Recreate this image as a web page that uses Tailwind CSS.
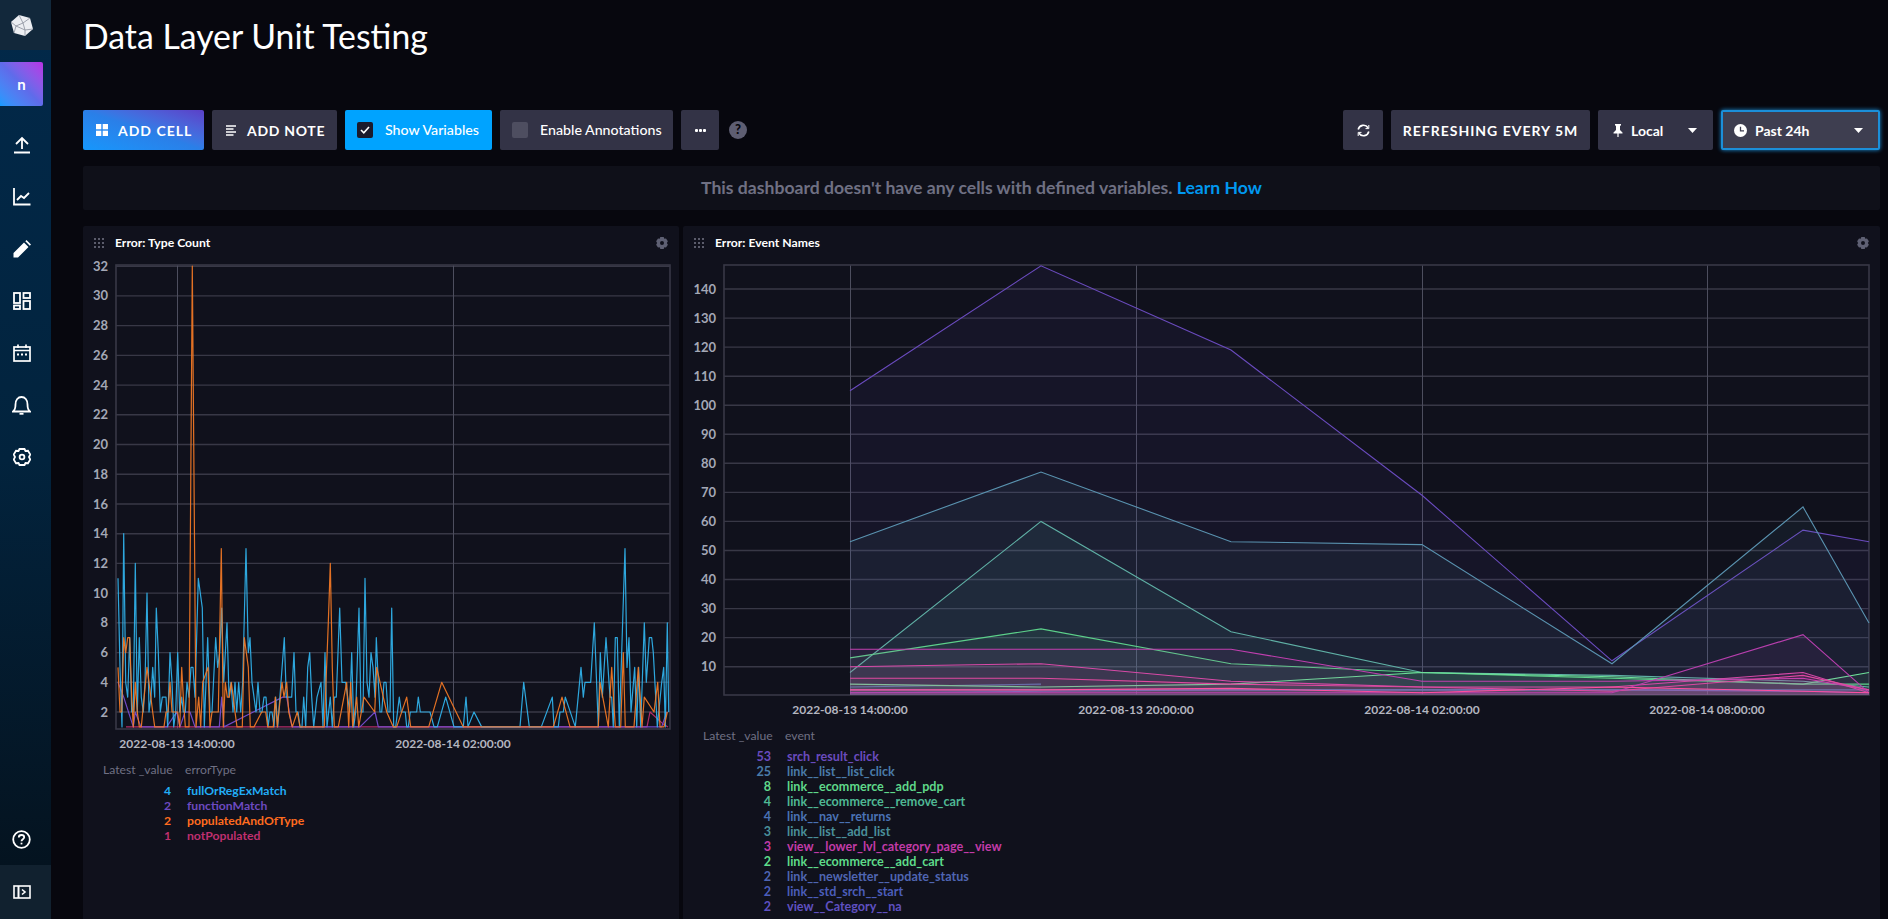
<!DOCTYPE html>
<html lang="en">
<head>
  <meta charset="UTF-8" />
  <title>Data Layer Unit Testing</title>
  <script src="https://cdn.jsdelivr.net/npm/@tailwindcss/browser@4"></script>
</head>
<body class="bg-[#07070e] h-screen overflow-hidden flex text-white [font-family:Lato,sans-serif]">

  <!-- SIDEBAR -->
  <nav class="w-[51px] shrink-0 h-full flex flex-col bg-gradient-to-b from-[#02294a] via-[#02233d] to-[#04111c]">
    <div class="h-[50px] bg-[#12283b] flex items-center">
      <div class="w-[43px] flex justify-center">
        <svg width="24" height="24" viewBox="9 9 24 24">
          <polygon points="18,11 29,14 32,25 24,32 13,29 10,18" fill="#eceef2"/>
          <path d="M18 11L22 19L29 14M22 19L15 22L10 18M15 22L13 29M15 22L24 26L24 32M24 26L32 25M24 26L22 19" stroke="#8a8f9c" stroke-width="0.8" fill="none"/>
        </svg>
      </div>
    </div>
    <div class="mt-[12px] w-[43px] h-[44px] rounded-r-[2px] bg-gradient-to-tr from-[#0f9bff] via-[#5f6bea] to-[#b72fe6] flex items-center justify-center text-[15px] font-bold">n</div>
    <div class="mt-[13px] w-[43px] flex flex-col items-center">
      <div class="h-[52px] flex items-center justify-center">
        <svg width="18" height="18" viewBox="0 0 18 18" fill="none" stroke="white" stroke-width="1.8"><path d="M1 16.5H17M9 13V2M3 8L9 2L15 8"/></svg>
      </div>
      <div class="h-[52px] flex items-center justify-center">
        <svg width="18" height="18" viewBox="0 0 18 18" fill="none" stroke="white" stroke-width="1.8"><path d="M1 0V16.5H17.5M4 12L8 8L11 10L16 5"/></svg>
      </div>
      <div class="h-[52px] flex items-center justify-center">
        <svg width="18" height="18" viewBox="0 0 18 18" fill="white"><path d="M0.5 13L11 2.5L15.5 7L5 17.5H0.5ZM12.3 1.2L13.5 0L18 4.5L16.8 5.7Z"/></svg>
      </div>
      <div class="h-[52px] flex items-center justify-center">
        <svg width="18" height="18" viewBox="0 0 18 18" fill="none" stroke="white" stroke-width="1.8"><rect x="1" y="1" width="6" height="10"/><rect x="10.5" y="1" width="6.5" height="5"/><rect x="1" y="13.5" width="6" height="3.5"/><rect x="10.5" y="9" width="6.5" height="8"/></svg>
      </div>
      <div class="h-[52px] flex items-center justify-center">
        <svg width="18" height="18" viewBox="0 0 18 18" fill="none" stroke="white" stroke-width="1.7"><rect x="1" y="3" width="16" height="14"/><path d="M1 6.5H17M5 0.5V4M13 0.5V4"/><path d="M4 10.5H6M8 10.5H10M12 10.5H14" stroke-width="1.8"/></svg>
      </div>
      <div class="h-[52px] flex items-center justify-center">
        <svg width="19" height="19" viewBox="0 0 19 19" fill="none" stroke="white" stroke-width="1.8"><path d="M1 15.5H18C16 14 15.5 12 15.5 8.5C15.5 4 13 1 9.5 1C6 1 3.5 4 3.5 8.5C3.5 12 3 14 1 15.5Z"/><path d="M7.5 17.8H11.5"/></svg>
      </div>
      <div class="h-[52px] flex items-center justify-center">
        <svg width="18" height="18" viewBox="0 0 18 18" fill="none" stroke="white" stroke-width="1.8"><path d="M6.5 1H11.5L12.5 3L15 2.8L17.3 6.5L16 9L17.3 11.5L15 15.2L12.5 15L11.5 17H6.5L5.5 15L3 15.2L0.7 11.5L2 9L0.7 6.5L3 2.8L5.5 3Z"/><circle cx="9" cy="9" r="2.4"/></svg>
      </div>
    </div>
    <div class="mt-auto flex flex-col">
      <div class="w-[43px] h-[54px] mb-[-1px] flex items-center justify-center">
        <svg width="19" height="19" viewBox="0 0 19 19" fill="none" stroke="white" stroke-width="1.8"><circle cx="9.5" cy="9.5" r="8.3"/><path d="M6.8 7.4C6.8 5.8 8 5 9.5 5C11 5 12.2 5.9 12.2 7.3C12.2 9.2 9.5 9.2 9.5 11.2"/><path d="M9.5 12.7V14.4"/></svg>
      </div>
      <div class="h-[54px] bg-[#11212f] flex items-center">
        <div class="w-[43px] flex justify-center">
          <svg width="18" height="14" viewBox="0 0 18 14" fill="none" stroke="white" stroke-width="1.6"><rect x="1" y="1" width="16" height="12"/><path d="M5.5 1V13" stroke-width="2"/><path d="M9 4.5L12 7L9 9.5"/></svg>
        </div>
      </div>
    </div>
  </nav>

  <!-- MAIN -->
  <main class="flex-1 min-w-0 pl-[32px] pr-[8px]">
    <h1 class="h-[110px] pt-[15px] text-[33.8px] leading-[42px] font-normal">Data Layer Unit Testing</h1>

    <!-- TOOLBAR -->
    <div class="h-[40px] flex justify-between">
      <div class="flex items-center gap-[8px]">
        <button class="h-[40px] w-[121px] rounded-[2px] bg-gradient-to-tr from-[#1497fc] via-[#2a7fe8] to-[#5a3fc8] flex items-center pl-[13px] gap-[10px] text-[14px] font-bold tracking-[1px]">
          <svg width="12" height="12" viewBox="0 0 12 12" fill="white"><rect width="5.3" height="5.3"/><rect x="6.7" width="5.3" height="5.3"/><rect y="6.7" width="5.3" height="5.3"/><rect x="6.7" y="6.7" width="5.3" height="5.3"/></svg>
          ADD CELL
        </button>
        <button class="h-[40px] w-[125px] rounded-[2px] bg-[#333346] flex items-center pl-[13px] gap-[10px] text-[14px] font-bold tracking-[0.7px]">
          <svg width="12" height="11" viewBox="0 0 12 11" fill="none" stroke="white" stroke-width="1.3"><path d="M1 1H11M1 4H8.5M1 7H11M1 10H8.5"/></svg>
          ADD NOTE
        </button>
        <div class="h-[40px] w-[147px] rounded-[2px] bg-[#00a3ff] flex items-center pl-[12px] gap-[12px] text-[14.2px] font-medium">
          <span class="w-[16px] h-[16px] rounded-[2px] bg-[#1b1b2d] flex items-center justify-center">
            <svg width="10" height="8" viewBox="0 0 10 8" fill="none" stroke="white" stroke-width="1.6"><path d="M1 4L3.8 6.8L9 1"/></svg>
          </span>
          Show Variables
        </div>
        <div class="h-[40px] w-[173px] rounded-[2px] bg-[#333346] flex items-center pl-[12px] gap-[12px] text-[14.2px] font-medium">
          <span class="w-[16px] h-[16px] rounded-[2px] bg-[#4e4e60]"></span>
          Enable Annotations
        </div>
        <button class="h-[40px] w-[38px] rounded-[2px] bg-[#333346] flex items-center justify-center">
          <svg width="11" height="3" viewBox="0 0 11 3" fill="white"><rect width="3" height="3" rx="1"/><rect x="4" width="3" height="3" rx="1"/><rect x="8" width="3" height="3" rx="1"/></svg>
        </button>
        <span class="ml-[2px] w-[18px] h-[18px] rounded-full bg-[#5e5e72] flex items-center justify-center text-[13px] font-black text-[#07070e]">?</span>
      </div>
      <div class="flex items-center gap-[8px]">
        <button class="h-[40px] w-[40px] rounded-[2px] bg-[#333346] flex items-center justify-center">
          <svg width="13" height="13" viewBox="0 0 13 13" fill="none" stroke="white" stroke-width="1.6"><path d="M1.2 5.5A5.4 5.4 0 0 1 11 3.8M11.8 7.5A5.4 5.4 0 0 1 2 9.2"/><path d="M11.8 1V4.6H8.5M1.2 12V8.4H4.5" stroke-width="1"/></svg>
        </button>
        <div class="h-[40px] w-[199px] rounded-[2px] bg-[#333346] flex items-center justify-center text-[14px] font-bold tracking-[1px]">REFRESHING EVERY 5M</div>
        <div class="h-[40px] w-[115px] rounded-[2px] bg-[#333346] flex items-center pl-[15px] pr-[16px] text-[14px] font-bold">
          <svg class="mr-[8px]" width="10" height="13" viewBox="0 0 10 13" fill="white"><path d="M2 0H8V1.2L7 2V6L9.5 8.5V9.5H5.6V13H4.4V9.5H0.5V8.5L3 6V2L2 1.2Z"/></svg>
          Local
          <svg class="ml-auto" width="9" height="5" viewBox="0 0 9 5" fill="white"><path d="M0 0H9L4.5 5Z"/></svg>
        </div>
        <div class="h-[40px] w-[159px] rounded-[2px] bg-[#3e3e50] border-2 border-[#1b8fd9] shadow-[0_0_4px_#1b8fd9] flex items-center pl-[11px] pr-[15px] text-[14px] font-bold">
          <svg class="mr-[8px]" width="13" height="13" viewBox="0 0 13 13"><circle cx="6.5" cy="6.5" r="6.5" fill="white"/><path d="M6.5 2.8V6.8H10" fill="none" stroke="#3e3e50" stroke-width="1.3"/></svg>
          Past 24h
          <svg class="ml-auto" width="9" height="5" viewBox="0 0 9 5" fill="white"><path d="M0 0H9L4.5 5Z"/></svg>
        </div>
      </div>
    </div>

    <!-- BANNER -->
    <div class="mt-[16px] h-[44px] rounded-[2px] bg-[#0f1019] flex items-center justify-center text-[17.6px] font-bold text-[#6f7083]">
      <span>This dashboard doesn't have any cells with defined variables. <span class="text-[#0098f0]">Learn How</span></span>
    </div>

    <!-- CELLS -->
    <div class="mt-[16px] flex gap-[4px] h-[700px]">
      <section class="w-[596px] shrink-0 rounded-[2px] bg-[#10111c]">
        <header class="h-[32px] flex items-center pt-[2px] pl-[11px] pr-[11px]">
          <svg width="10" height="10" viewBox="0 0 10 10" fill="#5b5c6b"><rect width="2" height="2"/><rect x="4" width="2" height="2"/><rect x="8" width="2" height="2"/><rect y="4" width="2" height="2"/><rect x="4" y="4" width="2" height="2"/><rect x="8" y="4" width="2" height="2"/><rect y="8" width="2" height="2"/><rect x="4" y="8" width="2" height="2"/><rect x="8" y="8" width="2" height="2"/></svg>
          <h3 class="ml-[11px] text-[12.2px] font-bold">Error: Type Count</h3>
          <svg class="ml-auto" width="12" height="12" viewBox="0 0 18 18" fill="#5e6073"><path d="M6.5 0H11.5L12.5 2.5L15 2.2L17.8 6.5L16.3 9L17.8 11.5L15 15.8L12.5 15.5L11.5 18H6.5L5.5 15.5L3 15.8L0.2 11.5L1.7 9L0.2 6.5L3 2.2L5.5 2.5ZM9 6A3 3 0 1 0 9 12A3 3 0 1 0 9 6Z" fill-rule="evenodd"/></svg>
        </header>
        <svg id="chart-left" class="block" width="596" height="497" viewBox="83 258 596 497"></svg>
        <div class="pl-[20px] pt-[5px] text-[12.2px]">
          <div class="flex h-[20px] items-center text-[#6f7083]"><span class="w-[70px] shrink-0 whitespace-nowrap">Latest _value</span><span class="ml-[12px]">errorType</span></div>
          <div class="mt-[3px] flex flex-col font-bold text-[12.2px] leading-[15px]">
            <div class="flex text-[#22adf6]"><span class="w-[68px] text-right">4</span><span class="ml-[16px]">fullOrRegExMatch</span></div>
            <div class="flex text-[#6e4ac0]"><span class="w-[68px] text-right">2</span><span class="ml-[16px]">functionMatch</span></div>
            <div class="flex text-[#ff6c1f]"><span class="w-[68px] text-right">2</span><span class="ml-[16px]">populatedAndOfType</span></div>
            <div class="flex text-[#bf2f6f]"><span class="w-[68px] text-right">1</span><span class="ml-[16px]">notPopulated</span></div>
          </div>
        </div>
      </section>

      <section class="flex-1 min-w-0 rounded-[2px] bg-[#10111c]">
        <header class="h-[32px] flex items-center pt-[2px] pl-[11px] pr-[11px]">
          <svg width="10" height="10" viewBox="0 0 10 10" fill="#5b5c6b"><rect width="2" height="2"/><rect x="4" width="2" height="2"/><rect x="8" width="2" height="2"/><rect y="4" width="2" height="2"/><rect x="4" y="4" width="2" height="2"/><rect x="8" y="4" width="2" height="2"/><rect y="8" width="2" height="2"/><rect x="4" y="8" width="2" height="2"/><rect x="8" y="8" width="2" height="2"/></svg>
          <h3 class="ml-[11px] text-[12.2px] font-bold">Error: Event Names</h3>
          <svg class="ml-auto" width="12" height="12" viewBox="0 0 18 18" fill="#5e6073"><path d="M6.5 0H11.5L12.5 2.5L15 2.2L17.8 6.5L16.3 9L17.8 11.5L15 15.8L12.5 15.5L11.5 18H6.5L5.5 15.5L3 15.8L0.2 11.5L1.7 9L0.2 6.5L3 2.2L5.5 2.5ZM9 6A3 3 0 1 0 9 12A3 3 0 1 0 9 6Z" fill-rule="evenodd"/></svg>
        </header>
        <svg id="chart-right" class="block" width="1197" height="468" viewBox="683 258 1197 468"></svg>
        <div class="pl-[20px] text-[12.2px]">
          <div class="flex h-[20px] items-center text-[#6f7083]"><span class="w-[70px] shrink-0 whitespace-nowrap">Latest _value</span><span class="ml-[12px]">event</span></div>
          <div class="mt-[3px] flex flex-col font-bold text-[12.6px] leading-[15px]">
            <div class="flex text-[#6a4bbe]"><span class="w-[68px] text-right">53</span><span class="ml-[16px]">srch_result_click</span></div>
            <div class="flex text-[#4a7ba8]"><span class="w-[68px] text-right">25</span><span class="ml-[16px]">link__list__list_click</span></div>
            <div class="flex text-[#5fd88a]"><span class="w-[68px] text-right">8</span><span class="ml-[16px]">link__ecommerce__add_pdp</span></div>
            <div class="flex text-[#4fb894]"><span class="w-[68px] text-right">4</span><span class="ml-[16px]">link__ecommerce__remove_cart</span></div>
            <div class="flex text-[#4a72b5]"><span class="w-[68px] text-right">4</span><span class="ml-[16px]">link__nav__returns</span></div>
            <div class="flex text-[#4a8f9a]"><span class="w-[68px] text-right">3</span><span class="ml-[16px]">link__list__add_list</span></div>
            <div class="flex text-[#c23ba8]"><span class="w-[68px] text-right">3</span><span class="ml-[16px]">view__lower_lvl_category_page__view</span></div>
            <div class="flex text-[#5edb8a]"><span class="w-[68px] text-right">2</span><span class="ml-[16px]">link__ecommerce__add_cart</span></div>
            <div class="flex text-[#4f65b2]"><span class="w-[68px] text-right">2</span><span class="ml-[16px]">link__newsletter__update_status</span></div>
            <div class="flex text-[#4b5dba]"><span class="w-[68px] text-right">2</span><span class="ml-[16px]">link__std_srch__start</span></div>
            <div class="flex text-[#5f50c0]"><span class="w-[68px] text-right">2</span><span class="ml-[16px]">view__Category__na</span></div>
          </div>
        </div>
      </section>
    </div>
  </main>

  <script>
    // values read off the chart: pairs of [x offset, value]
    const blue1 = [114,11,120,5,126,1,131,14,137,4,143,3,149,7,155,2,160,2,166,12,172,2,178,7,184,3,190,2,195,4,201,10,207,2,213,3,218,5,224,3,229,9,235,6,241,2,247,3,252,3,258,3,263,1,270,6,276,4,281,1,287,2,293,6,299,2,305,3,310,2,316,2,321,4,327,3,333,5,339,5,345,3,355,11,367,9,373,1,383,7,390,2,396,2,407,7,413,5,419,6,425,9,431,4,441,8,447,3,453,4,459,2,465,4,470,2,476,4,482,2,488,4,498,13,505,6,510,7,516,4,522,3,528,2,534,4,540,2,546,2,552,3,558,3,564,1,570,2,576,2,582,1,587,3,593,1,603,4,613,7,619,3,625,3,635,3,642,6,648,2,654,2,660,1,666,1,671,3,677,1,683,5,689,6,695,3,701,1,711,3,723,4,729,1,735,6,741,1,751,3,757,1,763,3,769,3,779,9,786,4,797,4,803,3,809,2,815,6,821,1,827,2,837,9,843,2,849,2,855,11,861,4,867,3,873,6,879,5,885,3,889,7,895,4];
    const blue2 = [0,2,5,2,12,4,18,4,24,2,30,2,35,9,41,1,47,1,58,3,64,2,70,2,76,2,80,1,85,1,91,2,110,2,115,3,121,2,150,2,162,1,172,1,197,3,222,1,250,1,258,3,264,1,282,2,305,1,420,1,431,4,448,1,484,1,517,3,522,1,535,1,540,2,550,2,556,3,586,1,603,5,610,3,615,4,632,4,643,8,655,1,661,6,667,3,678,7,690,3,695,3,700,1,706,7,712,7,718,1,735,13,741,5,747,7,753,2,764,5,770,1,776,5,782,1,793,8,799,4,808,7,815,7,820,6,832,1,845,4,851,5,856,1,862,8,866,2];
    const orange1 = [114,5,120,2,125,2,131,7,137,6,143,7,149,7,155,3,160,1,166,4,172,2,178,1,184,1,201,5,207,4,218,2,224,1,252,1,258,2,264,2,270,4,276,2,281,2,293,2,299,1,305,5,310,3,316,1,327,1,337,32,348,1,356,3,362,1,368,4,384,5,390,1,396,2,402,2,415,2,424,13,430,1,436,4,442,3,448,3,454,4,460,3,465,2,471,1,487,1,493,7,505,5,511,1,522,1,545,2,557,2,563,1,580,1,586,3,592,1,606,4,612,3,620,4,626,2,637,1,652,2,660,1,733,1,745,8,751,12,757,5,763,1,775,1,800,4,806,1,812,4,818,1,830,3,836,1,852,3,884,2,890,5,900,4];
    const orange2 = [0,4,20,2,40,1,50,1,80,3,92,1,146,1,185,4,250,1,520,1,546,3,570,1,655,1,660,4,685,1,695,5,706,1,722,1,730,6,736,1,762,1,775,5,786,1,793,3,822,2,833,4,840,1,852,1,862,2];
    const purple1 = [114,4,131,3,160,1,166,2,183,1,260,1,290,2,300,1,315,2,330,2,345,1,418,1,425,3,432,1,608,3,620,3,636,1,840,1,885,2,895,1];
    const purple2 = [845,1,860,2];

    function toPoints(list, origin) {
      const out = [];
      for (let i = 0; i < list.length; i += 2) out.push([origin + list[i] / 3, list[i + 1]]);
      return out;
    }

    const yLeft = v => 712 - (v - 2) * 14.86;
    const yRight = v => 695.7 - v * 2.905;

    function grid(cfg) {
      let s = '';
      cfg.ticks.forEach(v => {
        const y = cfg.y(v).toFixed(1);
        s += `<line x1="${cfg.left}" x2="${cfg.right}" y1="${y}" y2="${y}" stroke="#383846" stroke-width="1.4"/>`;
        s += `<text x="${cfg.labelX}" y="${+y + 4.5}" text-anchor="end" font-size="13" font-weight="700" fill="#a4a8b6">${v}</text>`;
      });
      cfg.times.forEach(t => {
        s += `<line x1="${t[0] + 0.5}" x2="${t[0] + 0.5}" y1="${cfg.top}" y2="${cfg.bottom}" stroke="#4d4e5e" stroke-width="1"/>`;
        s += `<text x="${t[0]}" y="${cfg.bottom + 18.5}" text-anchor="middle" font-size="12" font-weight="700" fill="#b4b6c0">${t[1]}</text>`;
      });
      s += `<rect x="${cfg.left}" y="${cfg.top}" width="${cfg.right - cfg.left}" height="${cfg.bottom - cfg.top}" fill="none" stroke="#383846" stroke-width="1.6"/>`;
      return s;
    }

    // left chart
    const left = document.getElementById('chart-left');
    const ticksLeft = [];
    for (let v = 2; v <= 32; v += 2) ticksLeft.push(v);
    let htmlLeft = grid({
      ticks: ticksLeft, y: yLeft, left: 116, right: 670, top: 265, bottom: 729, labelX: 108,
      times: [[177, '2022-08-13 14:00:00'], [453, '2022-08-14 02:00:00']]
    });
    const seriesLeft = [
      ['#bf2f6f', [[126, 1], [647, 1], [650, 2], [663, 1.2], [668, 1]]],
      ['#7a4fd6', [...toPoints(purple1, 80), ...toPoints(purple2, 380)]],
      ['#31b4ee', [...toPoints(blue1, 80), ...toPoints(blue2, 380)]],
      ['#f57a25', [...toPoints(orange1, 80), ...toPoints(orange2, 380)]]
    ];
    seriesLeft.forEach(([color, pts]) => {
      const d = pts.map(p => p[0].toFixed(1) + ',' + yLeft(p[1]).toFixed(1)).join(' ');
      htmlLeft += `<polyline points="${d}" fill="none" stroke="${color}" stroke-width="1.2" stroke-opacity="0.92" stroke-linejoin="round"/>`;
    });
    left.innerHTML = htmlLeft;

    // right chart
    const right = document.getElementById('chart-right');
    const ticksRight = [];
    for (let v = 10; v <= 140; v += 10) ticksRight.push(v);
    let htmlRight = grid({
      ticks: ticksRight, y: yRight, left: 724, right: 1869, top: 265, bottom: 695, labelX: 716,
      times: [[850, '2022-08-13 14:00:00'], [1136, '2022-08-13 20:00:00'], [1422, '2022-08-14 02:00:00'], [1707, '2022-08-14 08:00:00']]
    });
    const xs = [850, 1041, 1231, 1422, 1612, 1803, 1869];
    const seriesRight = [
      ['#7a4fd6', [1, 1.5, 2, 2, 2, 1.5, 1]],
      ['#4a70b5', [2, 2, 2, 2, 2, 2, 2]],
      ['#4a70b5', [3, 4]],
      ['#6a4bbe', [105, 148, 119, 69, 12, 57, 53]],
      ['#5a93b0', [53, 77, 53, 52, 11, 65, 25]],
      ['#5fb0a5', [8, 60, 22, 8, 7, 5, 3]],
      ['#5cd08a', [13, 23, 11, 8, 6, 4, 4]],
      ['#6ee09a', [4, 3, 4, 8, 6.5, 4, 8]],
      ['#c13fb0', [16, 16, 16, 5, 5, 6, 2]],
      ['#d84aa8', [10, 11, 5, 3, 3, 8, 1]],
      ['#e04aa0', [6, 6, 4, 3, 1.5, 7, 2]],
      ['#b83fae', [1, 1, 1, 1, 1, 21, 1]],
      ['#ff4fa0', [2, 2, 2.5, 1, 3, 1.5, 1]]
    ];
    seriesRight.forEach(([color, vals]) => {
      const pts = vals.map((v, i) => xs[i] + ',' + yRight(v).toFixed(1));
      const end = xs[vals.length - 1];
      htmlRight += `<polygon points="850,695 ${pts.join(' ')} ${end},695" fill="${color}" fill-opacity="0.08"/>`;
      htmlRight += `<polyline points="${pts.join(' ')}" fill="none" stroke="${color}" stroke-width="1.1"/>`;
    });
    right.innerHTML = htmlRight;
  </script>
</body>
</html>
